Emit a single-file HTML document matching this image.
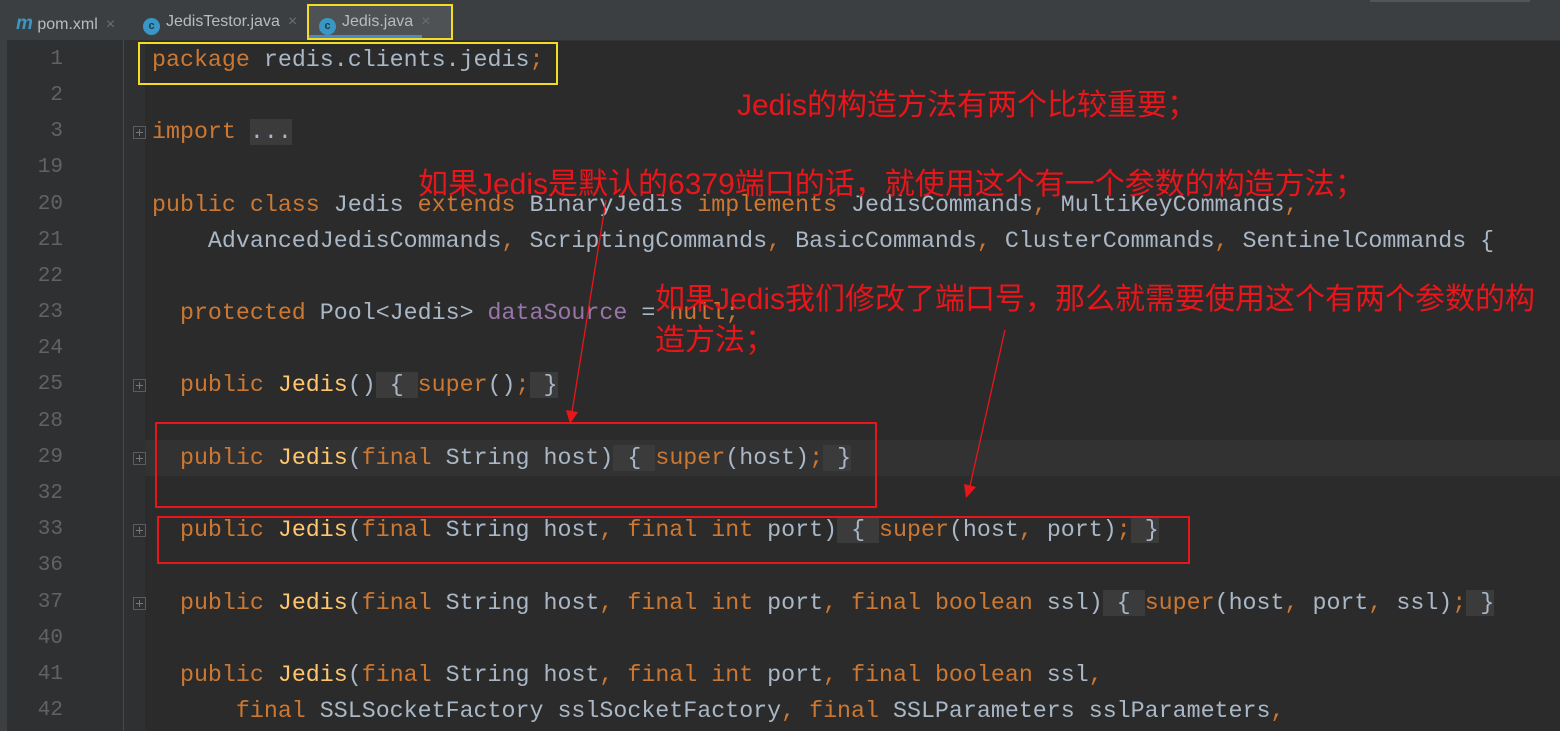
<!DOCTYPE html>
<html><head><meta charset="utf-8"><style>
body{margin:0;width:1560px;height:731px;overflow:hidden;background:#2b2b2b;position:relative;font-family:"Liberation Mono",monospace}
.tabbar{position:absolute;left:0;top:0;width:1560px;height:40px;background:#3c3f41;border-bottom:1px solid #323232}
.tab{position:absolute;top:13px;font:16px "Liberation Sans",sans-serif;color:#bbbbbb}
.tab .x{color:#6e6e6e;margin-left:8px}
.ico{display:inline-block;width:17px;height:17px;border-radius:50%;background:#3a96c4;color:#1e3d4f;font:bold 11px "Liberation Sans";text-align:center;line-height:17px;vertical-align:-3px;margin-right:6px}
.left{position:absolute;left:0;top:40px;width:7px;height:691px;background:#3c3f41}
.gutter{position:absolute;left:7px;top:40px;width:138px;height:691px;background:#2f3031}
.fline{position:absolute;left:123px;top:40px;width:1px;height:691px;background:#45484a}
.row{position:absolute;left:0;height:36px;line-height:36px;font-size:23.3px;white-space:pre;color:#a9b7c6}
.num{position:absolute;width:63px;text-align:right;color:#606366;font-size:21px}
.code{position:absolute;left:152px}
.k{color:#cc7832}.m{color:#ffc66d}.v{color:#9876aa}
.f{background:#3b3b3b}
.fold{position:absolute;left:133px;width:11px;height:11px;border:1px solid #5a5d5f;top:12px}
.fold:after{content:"";position:absolute;left:2px;top:5px;width:7px;height:1px;background:#777}
.fold:before{content:"";position:absolute;left:5px;top:2px;width:1px;height:7px;background:#777}
.ann{position:absolute;color:#e8161b;font:30px "Liberation Sans","Noto Sans CJK SC",sans-serif;white-space:nowrap;line-height:36px}
.box{position:absolute;box-sizing:border-box}
</style></head><body>
<div class="tabbar">
<div style="position:absolute;left:1370px;top:0;width:160px;height:2px;background:#555"></div>
<div class="tab" style="left:16px"><span style="color:#3a96c4;font:italic bold 19px 'Liberation Sans'">m</span> pom.xml<span class="x">×</span></div>
<div class="tab" style="left:143px"><span class="ico">c</span>JedisTestor.java<span class="x">×</span></div>
<div style="position:absolute;left:307px;top:4px;width:145px;height:36px;background:#4e5254"></div>
<div style="position:absolute;left:309px;top:35px;width:113px;height:3px;background:#4a88c7"></div>
<div class="tab" style="left:319px"><span class="ico">c</span>Jedis.java<span class="x">×</span></div>
</div>
<div class="left"></div><div class="gutter"></div><div class="fline"></div>
<div style="position:absolute;left:145px;top:440px;width:1415px;height:36px;background:#323232"></div>

<div class="row" style="top:42px;width:1560px"><span class="num">1</span><span class="code"><span class="k">package</span> redis.clients.jedis<span class="k">;</span></span></div>
<div class="row" style="top:78px"><span class="num">2</span></div>
<div class="row" style="top:114px;width:1560px"><span class="num">3</span><span class="fold"></span><span class="code"><span class="k">import</span> <span class="f">...</span></span></div>
<div class="row" style="top:150px"><span class="num">19</span></div>
<div class="row" style="top:187px;width:1560px"><span class="num">20</span><span class="code"><span class="k">public class</span> Jedis <span class="k">extends</span> BinaryJedis <span class="k">implements</span> JedisCommands<span class="k">,</span> MultiKeyCommands<span class="k">,</span></span></div>
<div class="row" style="top:223px;width:1560px"><span class="num">21</span><span class="code">    AdvancedJedisCommands<span class="k">,</span> ScriptingCommands<span class="k">,</span> BasicCommands<span class="k">,</span> ClusterCommands<span class="k">,</span> SentinelCommands {</span></div>
<div class="row" style="top:259px"><span class="num">22</span></div>
<div class="row" style="top:295px;width:1560px"><span class="num">23</span><span class="code">  <span class="k">protected</span> Pool&lt;Jedis&gt; <span class="v">dataSource</span> = <span class="k">null;</span></span></div>
<div class="row" style="top:331px"><span class="num">24</span></div>
<div class="row" style="top:367px;width:1560px"><span class="num">25</span><span class="fold"></span><span class="code">  <span class="k">public</span> <span class="m">Jedis</span>()<span class="f"> { </span><span class="k">super</span>()<span class="k">;</span><span class="f"> }</span></span></div>
<div class="row" style="top:404px"><span class="num">28</span></div>
<div class="row" style="top:440px;width:1560px"><span class="num">29</span><span class="fold"></span><span class="code">  <span class="k">public</span> <span class="m">Jedis</span>(<span class="k">final</span> String host)<span class="f"> { </span><span class="k">super</span>(host)<span class="k">;</span><span class="f"> }</span></span></div>
<div class="row" style="top:476px"><span class="num">32</span></div>
<div class="row" style="top:512px;width:1560px"><span class="num">33</span><span class="fold"></span><span class="code">  <span class="k">public</span> <span class="m">Jedis</span>(<span class="k">final</span> String host<span class="k">, final int</span> port)<span class="f"> { </span><span class="k">super</span>(host<span class="k">,</span> port)<span class="k">;</span><span class="f"> }</span></span></div>
<div class="row" style="top:548px"><span class="num">36</span></div>
<div class="row" style="top:585px;width:1560px"><span class="num">37</span><span class="fold"></span><span class="code">  <span class="k">public</span> <span class="m">Jedis</span>(<span class="k">final</span> String host<span class="k">, final int</span> port<span class="k">, final boolean</span> ssl)<span class="f"> { </span><span class="k">super</span>(host<span class="k">,</span> port<span class="k">,</span> ssl)<span class="k">;</span><span class="f"> }</span></span></div>
<div class="row" style="top:621px"><span class="num">40</span></div>
<div class="row" style="top:657px;width:1560px"><span class="num">41</span><span class="code">  <span class="k">public</span> <span class="m">Jedis</span>(<span class="k">final</span> String host<span class="k">, final int</span> port<span class="k">, final boolean</span> ssl<span class="k">,</span></span></div>
<div class="row" style="top:693px;width:1560px"><span class="num">42</span><span class="code">      <span class="k">final</span> SSLSocketFactory sslSocketFactory<span class="k">, final</span> SSLParameters sslParameters<span class="k">,</span></span></div>

<div class="box" style="left:307px;top:4px;width:146px;height:36px;border:2px solid #f2dc26"></div>
<div class="box" style="left:138px;top:42px;width:420px;height:43px;border:2px solid #f2dc26"></div>
<div class="box" style="left:155px;top:422px;width:722px;height:86px;border:2px solid #e8161b"></div>
<div class="box" style="left:157px;top:516px;width:1033px;height:48px;border:2px solid #e8161b"></div>

<div class="ann" style="left:737px;top:88px">Jedis的构造方法有两个比较重要；</div>
<div class="ann" style="left:418px;top:167px">如果Jedis是默认的6379端口的话，就使用这个有一个参数的构造方法；</div>
<div class="ann" style="left:655px;top:282px">如果Jedis我们修改了端口号，那么就需要使用这个有两个参数的构</div>
<div class="ann" style="left:655px;top:323px">造方法；</div>

<svg style="position:absolute;left:0;top:0" width="1560" height="731">
<line x1="606" y1="200" x2="572" y2="412" stroke="#e8161b" stroke-width="1.3"/>
<polygon points="566,410 578,412 570,424" fill="#e8161b"/>
<line x1="1005" y1="330" x2="970" y2="486" stroke="#e8161b" stroke-width="1.3"/>
<polygon points="964,484 976,487 966,498" fill="#e8161b"/>
</svg>
</body></html>
